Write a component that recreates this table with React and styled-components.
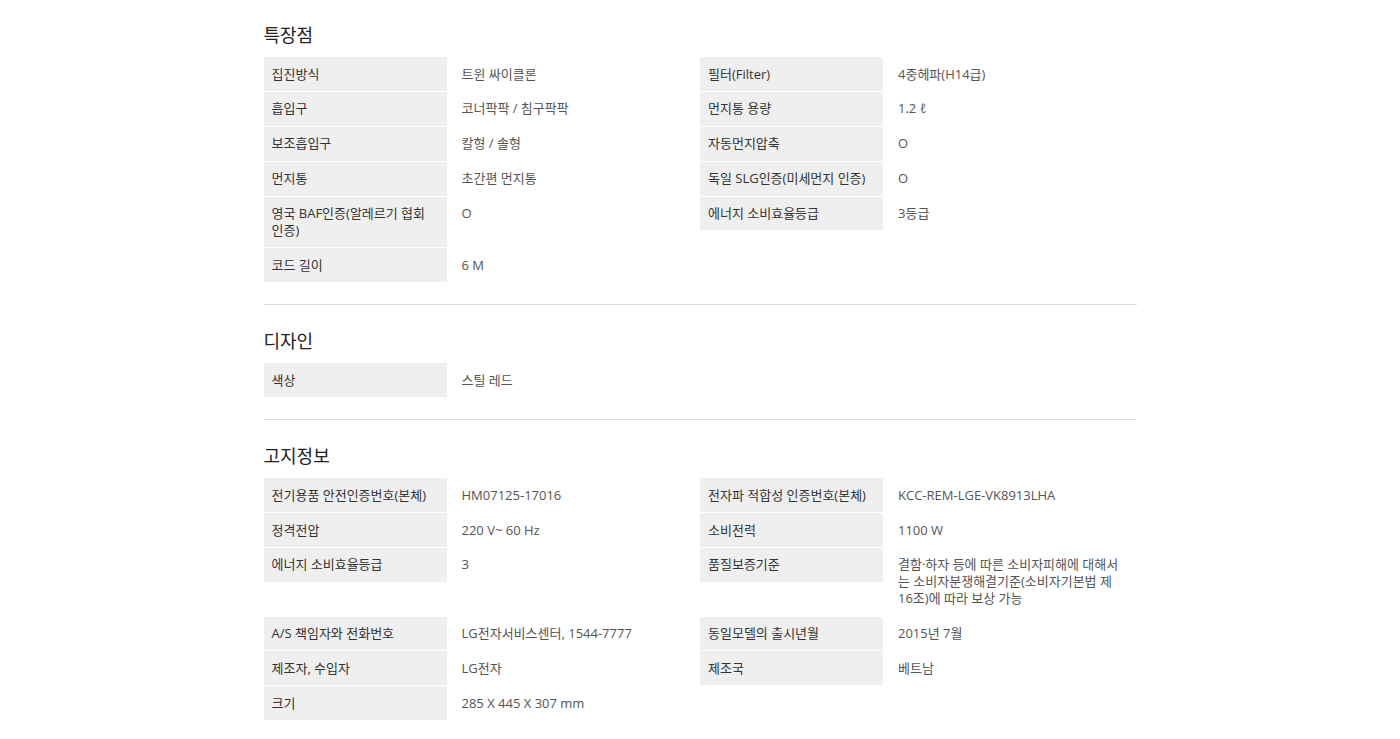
import styled, { createGlobalStyle } from 'styled-components';

const GlobalStyle = createGlobalStyle`
  body {
    margin: 0;
    background: #fff;
    font-family: "Open Sans", "Noto Sans CJK KR", sans-serif;
    color: #333;
  }
`;

const specs = [
  {
    title: '특장점',
    rows: [
      [['집진방식', '트윈 싸이클론'], ['필터(Filter)', '4중헤파(H14급)']],
      [['흡입구', '코너팍팍 / 침구팍팍'], ['먼지통 용량', '1.2 ℓ']],
      [['보조흡입구', '칼형 / 솔형'], ['자동먼지압축', 'O']],
      [['먼지통', '초간편 먼지통'], ['독일 SLG인증(미세먼지 인증)', 'O']],
      [['영국 BAF인증(알레르기 협회 인증)', 'O'], ['에너지 소비효율등급', '3등급']],
      [['코드 길이', '6 M']],
    ],
  },
  {
    title: '디자인',
    rows: [[['색상', '스틸 레드']]],
  },
  {
    title: '고지정보',
    rows: [
      [['전기용품 안전인증번호(본체)', 'HM07125-17016'], ['전자파 적합성 인증번호(본체)', 'KCC-REM-LGE-VK8913LHA']],
      [['정격전압', '220 V~ 60 Hz'], ['소비전력', '1100 W']],
      [['에너지 소비효율등급', '3'], ['품질보증기준', '결함·하자 등에 따른 소비자피해에 대해서는 소비자분쟁해결기준(소비자기본법 제 16조)에 따라 보상 가능']],
      [['A/S 책임자와 전화번호', 'LG전자서비스센터, 1544-7777'], ['동일모델의 출시년월', '2015년 7월']],
      [['제조자, 수입자', 'LG전자'], ['제조국', '베트남']],
      [['크기', '285 X 445 X 307 mm']],
    ],
  },
];

const App = () => {
  return (
    <>
      <GlobalStyle />
      <Page>
        {specs.map((section) => (
          <Section key={section.title}>
            <Heading>{section.title}</Heading>
            <SpecGrid>
              {section.rows.flat().map(([label, value], i) => (
                <SpecItem key={i}>
                  <Label>{label}</Label>
                  <Value>{value}</Value>
                </SpecItem>
              ))}
            </SpecGrid>
          </Section>
        ))}
      </Page>
    </>
  );
};

const Page = styled.div`
  width: 873px;
  margin: 0 auto;
`;

const Section = styled.section`
  padding: 23px 0 22px;
  border-bottom: 1px solid #dcdcdc;

  & + & {
    padding-top: 24px;
  }

  &:last-child {
    border-bottom: none;
  }
`;

const Heading = styled.h2`
  margin: 0 0 10px;
  font-size: 18px;
  line-height: 24px;
  font-weight: 400;
  color: #222;
`;

const SpecGrid = styled.div`
  display: grid;
  grid-template-columns: 1fr 1fr;
  align-items: start;
  row-gap: 1px;
`;

const SpecItem = styled.div`
  display: flex;
  align-items: flex-start;
  font-size: 13px;
  line-height: 1.3;
`;

const Label = styled.div`
  flex: 0 0 183px;
  box-sizing: border-box;
  padding: 8.5px 12px 8.5px 8px;
  background: #efefef;
  color: #333;
`;

const Value = styled.div`
  flex: 1;
  padding: 8.5px 15px;
  color: #555;
`;

export default App;
